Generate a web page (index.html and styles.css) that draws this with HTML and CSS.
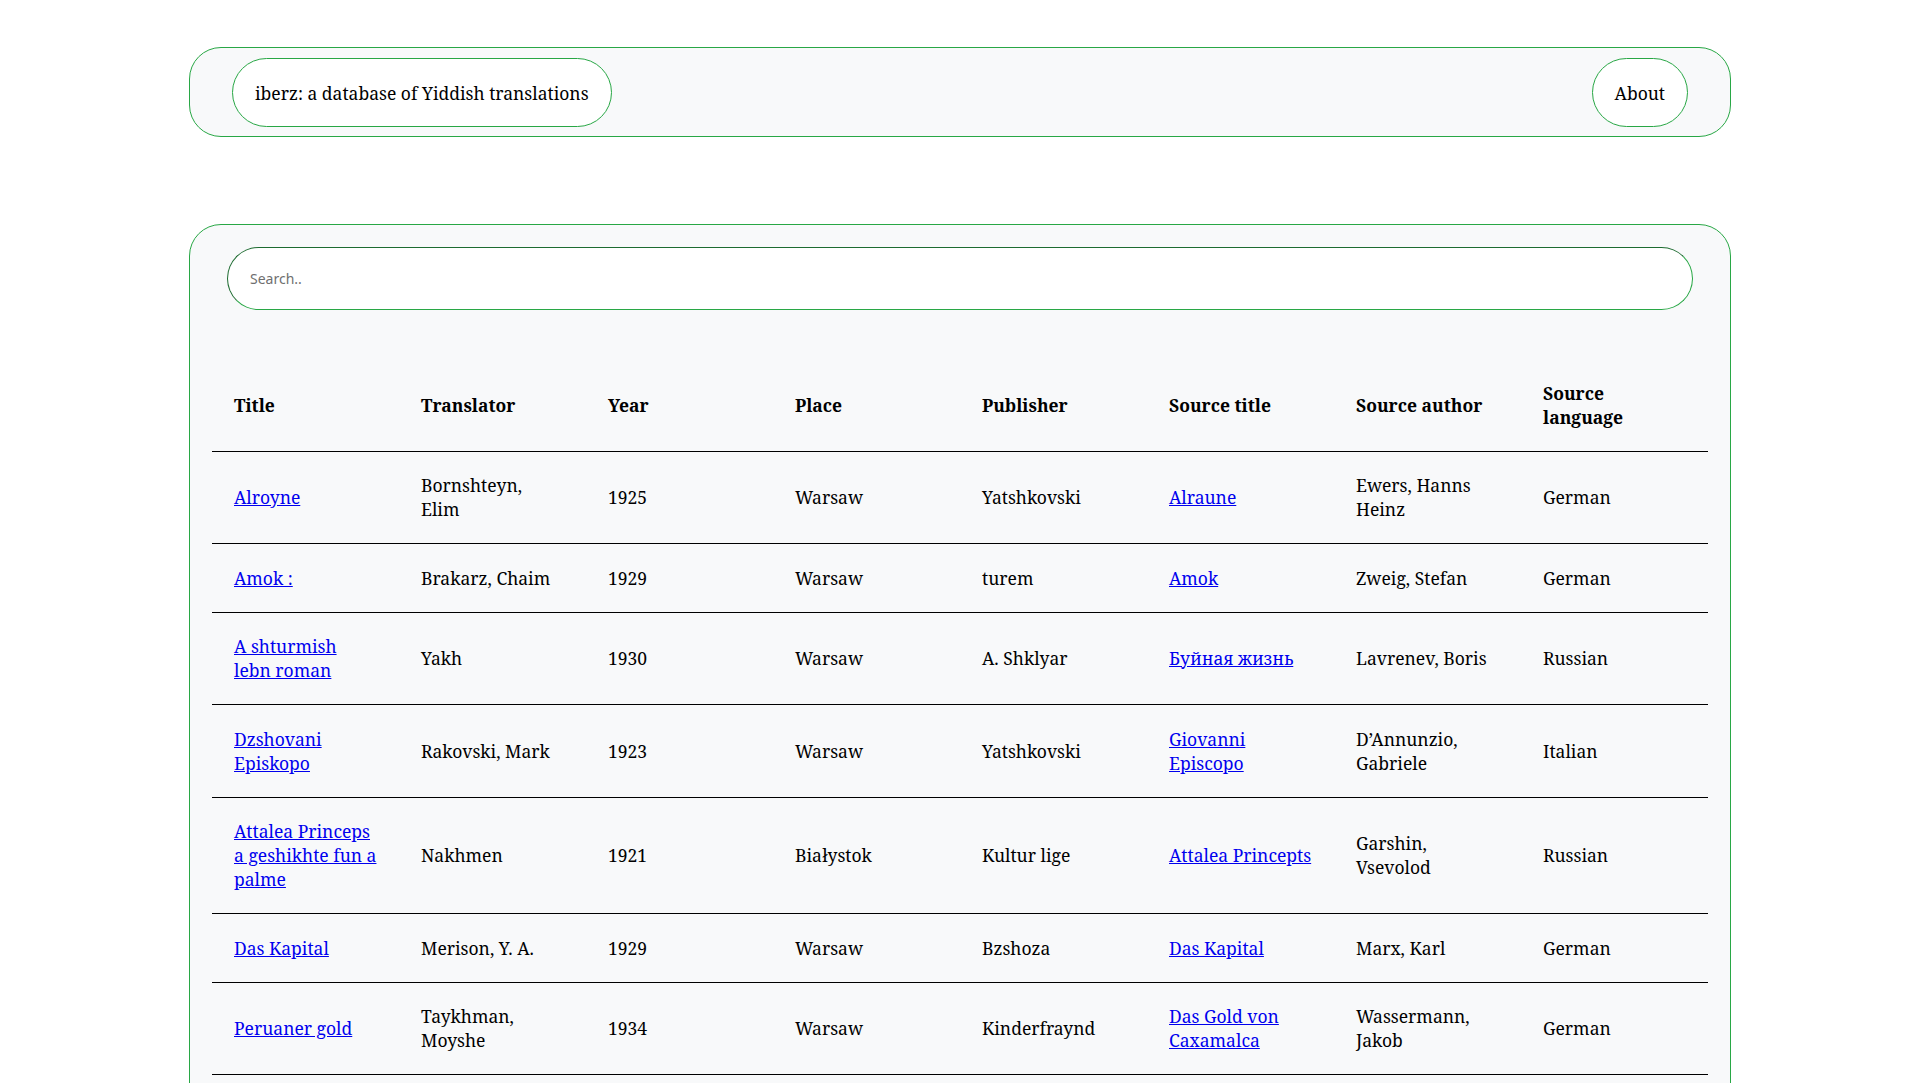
FILE: index.html
```html
<!DOCTYPE html>
<html lang="en">
<head>
<meta charset="utf-8">
<title>iberz: a database of Yiddish translations</title>
<link rel="stylesheet" href="styles.css">
</head>
<body>
<header class="topbar">
  <a class="pill brand" href="#">iberz: a database of Yiddish translations</a>
  <a class="pill about" href="#">About</a>
</header>
<main class="card">
  <input class="search" type="text" placeholder="Search..">
  <table class="results">
    <thead>
      <tr>
        <th>Title</th>
        <th>Translator</th>
        <th>Year</th>
        <th>Place</th>
        <th>Publisher</th>
        <th>Source title</th>
        <th>Source author</th>
        <th>Source language</th>
      </tr>
    </thead>
    <tbody>
      <tr>
        <td><a href="#">Alroyne</a></td>
        <td>Bornshteyn, Elim</td>
        <td>1925</td>
        <td>Warsaw</td>
        <td>Yatshkovski</td>
        <td><a href="#">Alraune</a></td>
        <td>Ewers, Hanns Heinz</td>
        <td>German</td>
      </tr>
      <tr>
        <td><a href="#">Amok :</a></td>
        <td>Brakarz, Chaim</td>
        <td>1929</td>
        <td>Warsaw</td>
        <td>turem</td>
        <td><a href="#">Amok</a></td>
        <td>Zweig, Stefan</td>
        <td>German</td>
      </tr>
      <tr>
        <td><a href="#">A shturmish lebn roman</a></td>
        <td>Yakh</td>
        <td>1930</td>
        <td>Warsaw</td>
        <td>A. Shklyar</td>
        <td><a href="#">Буйная жизнь</a></td>
        <td>Lavrenev, Boris</td>
        <td>Russian</td>
      </tr>
      <tr>
        <td><a href="#">Dzshovani Episkopo</a></td>
        <td>Rakovski, Mark</td>
        <td>1923</td>
        <td>Warsaw</td>
        <td>Yatshkovski</td>
        <td><a href="#">Giovanni Episcopo</a></td>
        <td>D’Annunzio, Gabriele</td>
        <td>Italian</td>
      </tr>
      <tr>
        <td><a href="#">Attalea Princeps a geshikhte fun a palme</a></td>
        <td>Nakhmen</td>
        <td>1921</td>
        <td>Białystok</td>
        <td>Kultur lige</td>
        <td><a href="#">Attalea Princepts</a></td>
        <td>Garshin, Vsevolod</td>
        <td>Russian</td>
      </tr>
      <tr>
        <td><a href="#">Das Kapital</a></td>
        <td>Merison, Y. A.</td>
        <td>1929</td>
        <td>Warsaw</td>
        <td>Bzshoza</td>
        <td><a href="#">Das Kapital</a></td>
        <td>Marx, Karl</td>
        <td>German</td>
      </tr>
      <tr>
        <td><a href="#">Peruaner gold</a></td>
        <td>Taykhman, Moyshe</td>
        <td>1934</td>
        <td>Warsaw</td>
        <td>Kinderfraynd</td>
        <td><a href="#">Das Gold von Caxamalca</a></td>
        <td>Wassermann, Jakob</td>
        <td>German</td>
      </tr>
    </tbody>
  </table>
</main>
</body>
</html>
```
FILE: styles.css
```css
html, body {
  margin: 0;
  padding: 0;
  background: #ffffff;
}

body {
  font-family: "Noto Serif", "DejaVu Serif", "Liberation Serif", serif;
  font-size: 17.5px;
  color: #000000;
  padding: 47px 0 0;
}

.topbar {
  box-sizing: border-box;
  width: 1542px;
  margin: 0 auto;
  border: 1px solid #28a745;
  border-radius: 32px;
  background: #f8f9fa;
  padding: 10px 42px 9px;
  display: flex;
  justify-content: space-between;
  align-items: center;
}

.pill {
  box-sizing: border-box;
  height: 69px;
  display: flex;
  align-items: center;
  padding: 0 22px;
  border: 1px solid #28a745;
  border-radius: 35px;
  background: #ffffff;
  color: #000000;
  text-decoration: none;
}

.card {
  box-sizing: border-box;
  width: 1542px;
  margin: 87px auto 0;
  border: 1px solid #28a745;
  border-radius: 32px;
  background: #f8f9fa;
  padding: 22px 22px 48px;
}

.search {
  box-sizing: border-box;
  display: block;
  width: calc(100% - 30px);
  height: 63px;
  margin: 0 15px 49px;
  padding: 0 22px;
  border: 1px solid #28a745;
  border-top-color: #1d6b30;
  border-left-color: #1d6b30;
  border-radius: 32px;
  background: #ffffff;
  font-family: "Noto Sans", "Open Sans", sans-serif;
  font-size: 14px;
  color: #000000;
  outline: none;
}

.search::placeholder {
  color: #6f6f6f;
}

.results {
  width: 100%;
  border-collapse: collapse;
  table-layout: fixed;
}

.results th,
.results td {
  padding: 21.75px 22px;
  line-height: 24px;
  text-align: left;
  vertical-align: middle;
  border-bottom: 1px solid #000000;
}

.results th {
  font-weight: bold;
}

.results a {
  color: #0000ee;
  text-decoration: underline;
}
```
